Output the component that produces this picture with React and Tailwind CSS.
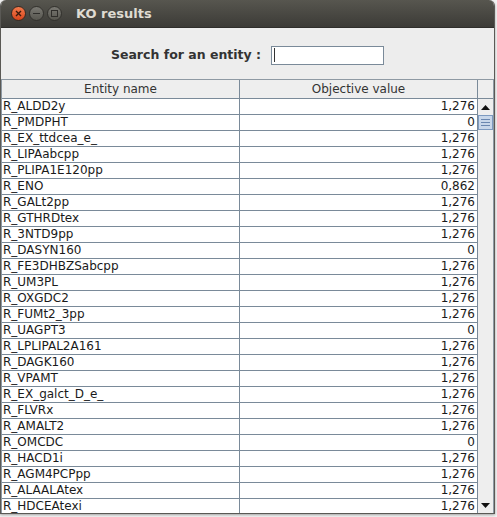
import React from "react";

const rows = [
  ["R_ALDD2y", "1,276"],
  ["R_PMDPHT", "0"],
  ["R_EX_ttdcea_e_", "1,276"],
  ["R_LIPAabcpp", "1,276"],
  ["R_PLIPA1E120pp", "1,276"],
  ["R_ENO", "0,862"],
  ["R_GALt2pp", "1,276"],
  ["R_GTHRDtex", "1,276"],
  ["R_3NTD9pp", "1,276"],
  ["R_DASYN160", "0"],
  ["R_FE3DHBZSabcpp", "1,276"],
  ["R_UM3PL", "1,276"],
  ["R_OXGDC2", "1,276"],
  ["R_FUMt2_3pp", "1,276"],
  ["R_UAGPT3", "0"],
  ["R_LPLIPAL2A161", "1,276"],
  ["R_DAGK160", "1,276"],
  ["R_VPAMT", "1,276"],
  ["R_EX_galct_D_e_", "1,276"],
  ["R_FLVRx", "1,276"],
  ["R_AMALT2", "1,276"],
  ["R_OMCDC", "0"],
  ["R_HACD1i", "1,276"],
  ["R_AGM4PCPpp", "1,276"],
  ["R_ALAALAtex", "1,276"],
  ["R_HDCEAtexi", "1,276"],
];

export default function App() {
  return (
    <div className="w-[497px] h-[517px] bg-[#f4f4f4] overflow-hidden" style={{ fontFamily: '"DejaVu Sans", sans-serif' }}>
      <div className="w-[495px] h-[514px] flex flex-col rounded-t-[6px] overflow-hidden bg-[#ededed] border-l border-r border-b border-[#5a5955] shadow-[0_1px_3px_rgba(0,0,0,0.35)]">
        {/* Title bar */}
        <div className="h-[28px] shrink-0 flex items-center bg-gradient-to-b from-[#57564f] to-[#3c3b37] border-b border-[#2f2e2b]">
          <div className="flex items-center gap-[3px] ml-[10px]">
            <div className="w-[15px] h-[15px] rounded-full bg-gradient-to-b from-[#f27a4c] to-[#d9441a] border border-[#3a2a22] flex items-center justify-center">
              <svg width="7" height="7" viewBox="0 0 7 7">
                <path d="M1 1 L6 6 M6 1 L1 6" stroke="#3b1a0c" strokeWidth="1.4" />
              </svg>
            </div>
            <div className="w-[15px] h-[15px] rounded-full bg-gradient-to-b from-[#7a7973] to-[#57564f] border border-[#33322e] flex items-center justify-center">
              <div className="w-[7px] h-[1.5px] bg-[#2f2e2b]" />
            </div>
            <div className="w-[15px] h-[15px] rounded-full bg-gradient-to-b from-[#7a7973] to-[#57564f] border border-[#33322e] flex items-center justify-center">
              <div className="w-[7px] h-[7px] border-[1.5px] border-[#2f2e2b]" />
            </div>
          </div>
          <div className="ml-[14px] text-[13px] font-bold text-[#dfdbd2] leading-none">
            KO results
          </div>
        </div>

        {/* Search row */}
        <div className="h-[51px] shrink-0 flex items-center justify-center gap-[10px] pt-[3px]">
          <span className="text-[12.5px] font-bold text-[#333333]">Search for an entity :</span>
          <div className="w-[113px] h-[19px] bg-white border border-[#7a8a99] flex items-center pl-[2px]">
            <div className="w-[1px] h-[14px] bg-[#333]" />
          </div>
        </div>

        {/* Table */}
        <div className="flex-1 min-h-0 flex border-t border-l border-[#8e99a3] overflow-hidden">
          <div className="w-[476px] flex flex-col overflow-hidden">
            <div className="flex h-[19px] shrink-0 bg-[#eeeeee] border-b border-[#7a8a99]">
              <div className="w-[238px] border-r border-[#7a8a99] flex items-center justify-center text-[12px] text-[#333]">Entity name</div>
              <div className="w-[238px] border-r border-[#7a8a99] flex items-center justify-center text-[12px] text-[#333]">Objective value</div>
            </div>
            <div className="flex flex-col bg-white">
              {rows.map(([n, v], i) => (
                <div key={i} className="flex h-[16px] shrink-0 border-b border-[#7a8a99] text-[12px] leading-[15px] text-[#1a1a1a]">
                  <div className="w-[238px] border-r border-[#7a8a99] pl-[1px] whitespace-nowrap overflow-hidden">{n}</div>
                  <div className="w-[238px] border-r border-[#7a8a99] pr-[2px] text-right">{v}</div>
                </div>
              ))}
            </div>
          </div>
          {/* Scrollbar column */}
          <div className="w-[16px] flex flex-col border-r border-[#8e99a3]">
            <div className="h-[19px] shrink-0 bg-[#eeeeee] border-b border-[#7a8a99]" />
            <div className="flex-1 flex flex-col bg-[#eeeeee]">
              <div className="h-[16px] shrink-0 flex items-center justify-center">
                <svg width="9" height="5" viewBox="0 0 9 5"><path d="M0 5 L4.5 0 L9 5 Z" fill="#111" /></svg>
              </div>
              <div className="h-[15px] shrink-0 bg-[#c8d7ea] border border-[#7d9ac0] flex flex-col items-center justify-center gap-[2px]">
                <div className="w-[9px] h-[1px] bg-[#6a87b0]" />
                <div className="w-[9px] h-[1px] bg-[#6a87b0]" />
                <div className="w-[9px] h-[1px] bg-[#6a87b0]" />
              </div>
              <div className="flex-1" />
              <div className="h-[16px] shrink-0 flex items-center justify-center">
                <svg width="9" height="5" viewBox="0 0 9 5"><path d="M0 0 L9 0 L4.5 5 Z" fill="#111" /></svg>
              </div>
            </div>
          </div>
        </div>
      </div>
    </div>
  );
}
